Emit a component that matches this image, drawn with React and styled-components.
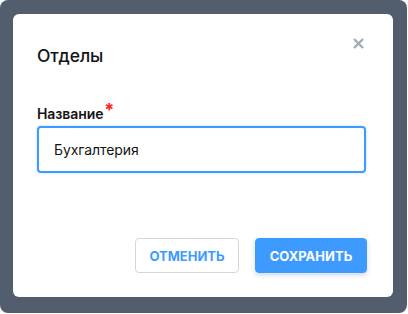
import React from "react";
import styled, { createGlobalStyle } from "styled-components";

const Global = createGlobalStyle`
  html, body { margin: 0; padding: 0; background: #ffffff; }
  * { box-sizing: border-box; }
  body { font-family: Inter, "Noto Sans", "Liberation Sans", sans-serif; }
`;

const Frame = styled.div`
  width: 407px;
  height: 313px;
  background: #525e6e;
  border-radius: 8px;
  padding: 14px 14px 16px 13px;
  display: flex;
`;

const Card = styled.div`
  flex: 1;
  background: #ffffff;
  border-radius: 6px;
  padding: 0 26px 24px 24px;
  display: flex;
  flex-direction: column;
`;

const Header = styled.div`
  display: flex;
  justify-content: space-between;
  align-items: flex-start;
  height: 91px;
`;

const Title = styled.h2`
  margin: 30px 0 0;
  font-size: 17.5px;
  font-weight: 500;
  line-height: 24px;
  color: #141414;
  letter-spacing: -0.1px;
`;

const Close = styled.button`
  margin: 22px 2px 0 0;
  padding: 0;
  width: 14px;
  height: 14px;
  border: none;
  background: none;
  display: flex;
  align-items: center;
  justify-content: center;
  cursor: pointer;
`;

const Field = styled.div`
  display: flex;
  flex-direction: column;
  gap: 3px;
`;

const Label = styled.label`
  font-size: 14px;
  font-weight: 600;
  line-height: 18px;
  color: #141414;
  letter-spacing: -0.1px;
`;

const Required = styled.span`
  color: #ff2020;
  font-size: 18px;
  font-weight: 700;
  line-height: 0;
  position: relative;
  top: -3px;
  margin-left: 1px;
`;

const Input = styled.input`
  width: 329px;
  height: 47px;
  border: 2px solid #3d9bff;
  border-radius: 4px;
  padding: 0 15px;
  font-family: inherit;
  font-size: 14px;
  color: #141414;
  outline: none;
  box-shadow: 0 0 3px rgba(61, 155, 255, 0.35);
  letter-spacing: -0.1px;
`;

const Footer = styled.div`
  margin-top: auto;
  display: flex;
  justify-content: flex-end;
  gap: 16px;
`;

const Button = styled.button`
  height: 35px;
  padding: 0;
  width: ${(p) => p.$w}px;
  border-radius: 4px;
  font-family: inherit;
  font-size: 13px;
  font-weight: 700;
  letter-spacing: 0px;
  text-transform: uppercase;
  cursor: pointer;
  border: 1px solid ${(p) => (p.$primary ? "#3d9bff" : "#d3d7dd")};
  background: ${(p) => (p.$primary ? "#3d9bff" : "#ffffff")};
  color: ${(p) => (p.$primary ? "#ffffff" : "#3d9bff")};
  box-shadow: ${(p) => (p.$primary ? "0 2px 5px rgba(20, 60, 110, 0.2)" : "none")};
`;

export default function App() {
  return (
    <>
      <Global />
      <Frame>
        <Card>
          <Header>
            <Title>Отделы</Title>
            <Close aria-label="Закрыть">
              <svg width="11" height="11" viewBox="0 0 11 11">
                <path d="M1 1 L10 10 M10 1 L1 10" stroke="#a3abb6" strokeWidth="2.4" strokeLinecap="butt" />
              </svg>
            </Close>
          </Header>
          <Field>
            <Label>
              Название<Required>*</Required>
            </Label>
            <Input defaultValue="Бухгалтерия" />
          </Field>
          <Footer>
            <Button $w={104}>Отменить</Button>
            <Button $w={112} $primary>Сохранить</Button>
          </Footer>
        </Card>
      </Frame>
    </>
  );
}
